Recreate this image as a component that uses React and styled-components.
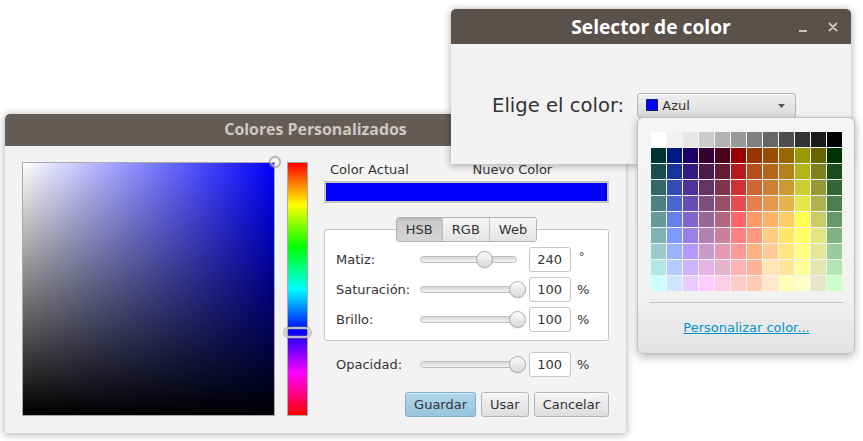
import React from "react";
import styled, { createGlobalStyle } from "styled-components";

const GlobalStyle = createGlobalStyle`
  html, body { margin: 0; padding: 0; background: #ffffff; }
  body { font-family: "DejaVu Sans", "Liberation Sans", sans-serif; }
  * { box-sizing: border-box; }
`;

const PALETTE = [
  [255,255,255],[242,242,242],[230,230,230],[204,204,204],[179,179,179],[153,153,153],[128,128,128],[102,102,102],[77,77,77],[51,51,51],[26,26,26],[0,0,0],
  [0,51,51],[0,26,128],[26,0,104],[51,0,51],[77,0,26],[153,0,0],[153,51,0],[153,77,0],[153,102,0],[153,153,0],[102,102,0],[0,51,0],
  [26,77,77],[26,51,153],[51,26,128],[77,26,77],[102,26,51],[179,26,26],[179,77,26],[179,102,26],[179,128,26],[179,179,26],[128,128,26],[26,77,26],
  [51,102,102],[51,77,179],[77,51,153],[102,51,102],[128,51,77],[204,51,51],[204,102,51],[204,128,51],[204,153,51],[204,204,51],[153,153,51],[51,102,51],
  [77,128,128],[77,102,204],[102,77,179],[128,77,128],[153,77,102],[230,77,77],[230,128,77],[230,153,77],[230,179,77],[230,230,77],[179,179,77],[77,128,77],
  [102,153,153],[102,128,230],[128,102,204],[153,102,153],[179,102,128],[255,102,102],[255,153,102],[255,179,102],[255,204,102],[255,255,77],[204,204,102],[102,153,102],
  [128,179,179],[128,153,255],[153,128,230],[179,128,179],[204,128,153],[255,128,128],[255,153,128],[255,204,128],[255,230,102],[255,255,102],[230,230,128],[128,179,128],
  [153,204,204],[153,179,255],[179,153,255],[204,153,204],[230,153,179],[255,153,153],[255,179,128],[255,204,153],[255,230,128],[255,255,128],[230,230,153],[153,204,153],
  [179,230,230],[179,204,255],[204,179,255],[230,179,230],[230,179,204],[255,179,179],[255,179,153],[255,230,179],[255,230,153],[255,255,153],[230,230,179],[179,230,179],
  [204,255,255],[204,230,255],[230,204,255],[255,204,255],[255,204,230],[255,204,204],[255,204,179],[255,230,204],[255,255,179],[255,255,204],[230,230,204],[204,255,204],
];

const Desktop = styled.div`
  position: relative;
  width: 863px;
  height: 441px;
  overflow: hidden;
  background: #ffffff;
`;

const Window = styled.section`
  position: absolute;
  left: ${(p) => p.$x}px;
  top: ${(p) => p.$y}px;
  width: ${(p) => p.$w}px;
  height: ${(p) => p.$h}px;
  display: flex;
  flex-direction: column;
  background: #f3f3f3;
  border-radius: 5px 5px 0 0;
  box-shadow: 0 1px 7px 1px rgba(0, 0, 0, 0.28);
  overflow: hidden;
`;

const TitleBar = styled.header`
  flex: 0 0 ${(p) => p.$h}px;
  display: grid;
  grid-template-columns: 1fr auto 1fr;
  align-items: center;
  background: ${(p) => (p.$active ? "#5a514b" : "#645c56")};
  color: ${(p) => (p.$active ? "#ffffff" : "#cdc8c3")};
  font-family: "Open Sans", "DejaVu Sans", sans-serif;
  font-weight: 700;
  font-size: ${(p) => p.$fs}px;
  line-height: 1;
`;

const TitleText = styled.span`
  grid-column: 2;
  white-space: nowrap;
`;

const Controls = styled.div`
  grid-column: 3;
  justify-self: end;
  display: flex;
  align-items: center;
  gap: 20px;
  padding-right: 13px;
  color: #c9c4bf;
`;

/* ---------- Color editor window ---------- */

const EditorBody = styled.div`
  flex: 1;
  display: flex;
  align-items: flex-start;
  padding: 16px 17px 0 17px;
`;

const SVSquare = styled.div`
  position: relative;
  flex: none;
  width: 253px;
  height: 254px;
  border: 1px solid #a9a9a9;
  background:
    linear-gradient(to bottom, rgba(0, 0, 0, 0), #000000),
    linear-gradient(to right, #ffffff, rgba(255, 255, 255, 0)),
    ${(p) => p.$hue};
`;

const SVMarker = styled.div`
  position: absolute;
  right: -7px;
  top: -7px;
  width: 12px;
  height: 12px;
  border-radius: 50%;
  border: 2px solid rgba(160, 160, 160, 0.75);
  box-shadow: inset 0 0 0 1px rgba(255, 255, 255, 0.8), 0 0 2px rgba(0, 0, 0, 0.2);
`;

const HueBar = styled.div`
  position: relative;
  flex: none;
  width: 21px;
  height: 254px;
  margin-left: 12px;
  border: 1px solid #a9a9a9;
  background: linear-gradient(
    to bottom,
    #ff0000 0%,
    #ffff00 16.67%,
    #00ff00 33.33%,
    #00ffff 50%,
    #0000ff 66.67%,
    #ff00ff 83.33%,
    #ff0000 100%
  );
`;

const HueMarker = styled.div`
  position: absolute;
  left: -4px;
  width: 27px;
  height: 11px;
  border-radius: 6px;
  border: 2px solid rgba(205, 205, 205, 0.9);
  box-shadow: 0 0 0 1px rgba(110, 110, 110, 0.45), inset 0 0 0 1px rgba(120, 120, 120, 0.35);
`;

const RightPanel = styled.div`
  flex: none;
  width: 285px;
  margin-left: 16px;
  display: flex;
  flex-direction: column;
  color: #333333;
  font-size: 13px;
`;

const ColorLabels = styled.div`
  display: grid;
  grid-template-columns: 1fr 1fr;
  height: 16px;
  line-height: 16px;
  & > span {
    padding-left: 6px;
  }
`;

const ColorBar = styled.div`
  margin-top: 3px;
  height: 22px;
  border: 2px solid #c3c3c3;
  background: ${(p) => p.$color};
`;

const Tabs = styled.div`
  position: relative;
  z-index: 1;
  align-self: center;
  margin-top: 14px;
  display: flex;
  height: 25px;
  border: 1px solid #b3b3b3;
  border-radius: 3px;
  overflow: hidden;
`;

const Tab = styled.div`
  display: flex;
  align-items: center;
  padding: 0 ${(p) => p.$pad}px;
  height: 100%;
  color: #333;
  border-left: ${(p) => (p.$first ? "none" : "1px solid #c0c0c0")};
  background: ${(p) =>
    p.$selected
      ? "linear-gradient(to bottom, #c9c9c9, #d6d6d6)"
      : "linear-gradient(to bottom, #f7f7f7, #e4e4e4)"};
  box-shadow: ${(p) => (p.$selected ? "inset 0 1px 2px rgba(0,0,0,0.12)" : "none")};
`;

const GroupBox = styled.div`
  margin-top: -13px;
  height: 112px;
  border: 1px solid #c6c6c6;
  border-radius: 3px;
  background: #ffffff;
  padding: 17px 0 0 11px;
  display: flex;
  flex-direction: column;
  gap: 5px;
`;

const Row = styled.div`
  display: flex;
  align-items: center;
  height: 25px;
  padding-left: ${(p) => p.$indent || 0}px;
  margin-top: ${(p) => p.$top || 0}px;
`;

const RowLabel = styled.span`
  flex: none;
  width: 84px;
  white-space: nowrap;
`;

const SliderBox = styled.div`
  position: relative;
  flex: none;
  width: 97px;
  height: 25px;
  display: flex;
  align-items: center;
`;

const SliderTrack = styled.div`
  width: 100%;
  height: 7px;
  border-radius: 4px;
  border: 1px solid #bdbdbd;
  background: linear-gradient(to bottom, #d9d9d9, #f3f3f3);
`;

const SliderThumb = styled.div`
  position: absolute;
  top: 4px;
  width: 17px;
  height: 17px;
  border-radius: 50%;
  border: 1px solid #a9a9a9;
  background: linear-gradient(to bottom, #fbfbfb, #dadada);
  box-shadow: 0 1px 1px rgba(0, 0, 0, 0.08);
`;

const NumberField = styled.input`
  flex: none;
  width: 42px;
  height: 25px;
  margin-left: 12px;
  border: 1px solid #c6c6c6;
  border-radius: 3px;
  background: #ffffff;
  padding: 0 8px 0 0;
  text-align: right;
  font: 13px "DejaVu Sans", sans-serif;
  color: #333;
  outline: none;
`;

const Unit = styled.span`
  margin-left: ${(p) => p.$ml}px;
  margin-top: ${(p) => p.$mt || 0}px;
  font-size: ${(p) => p.$fs || 13}px;
`;

const ButtonRow = styled.div`
  margin-top: 15px;
  display: flex;
  justify-content: flex-end;
  gap: 5px;
`;

const Button = styled.button`
  height: 25px;
  padding: 0 8px;
  border: 1px solid ${(p) => (p.$default ? "#7dadc9" : "#b6b6b6")};
  border-radius: 3px;
  background: ${(p) =>
    p.$default
      ? "linear-gradient(to bottom, #aed5ea, #98c5dd)"
      : "linear-gradient(to bottom, #f6f6f6, #dddddd)"};
  box-shadow: inset 0 1px 0 rgba(255, 255, 255, 0.55);
  font: 13px "DejaVu Sans", sans-serif;
  color: #333;
`;

/* ---------- Picker window ---------- */

const PickerBody = styled.div`
  flex: 1;
  display: flex;
  align-items: center;
  gap: 13px;
  padding: 2px 0 0 41px;
`;

const PromptLabel = styled.span`
  font-size: 19.6px;
  color: #333333;
  white-space: nowrap;
`;

const ComboBox = styled.div`
  width: 159px;
  height: 25px;
  display: flex;
  align-items: center;
  padding: 0 10px 0 8px;
  border: 1px solid #b4b4b4;
  border-radius: 3px;
  background: linear-gradient(to bottom, #efefef, #dbdbdb);
  box-shadow: inset 0 1px 0 rgba(255, 255, 255, 0.6);
  font-size: 13px;
  color: #333;
`;

const ComboSwatch = styled.span`
  width: 12px;
  height: 12px;
  flex: none;
  background: ${(p) => p.$color};
  border: 1px solid #1a1a6a;
`;

const ComboText = styled.span`
  margin-left: 4px;
  flex: 1;
`;

const Popup = styled.div`
  position: absolute;
  left: 637px;
  top: 117px;
  width: 218px;
  height: 237px;
  border: 1px solid #c2c2c2;
  border-radius: 6px;
  background: linear-gradient(to bottom, #f5f5f5 0%, #f2f2f2 75%, #e2e2e2 100%);
  box-shadow: 0 3px 8px rgba(0, 0, 0, 0.28);
  padding: 14px 0 0 13px;
  display: flex;
  flex-direction: column;
`;

const PaletteGrid = styled.div`
  display: grid;
  grid-template-columns: repeat(12, 15px);
  grid-auto-rows: 15px;
  gap: 1px;
`;

const Swatch = styled.div`
  background: ${(p) => p.$c};
`;

const Separator = styled.div`
  margin-top: 11px;
  width: 193px;
  margin-left: -1px;
  border-top: 1px solid #c4c4c4;
`;

const LinkRow = styled.div`
  margin-top: 17px;
  width: 191px;
  display: flex;
  justify-content: center;
`;

const Link = styled.a`
  font-size: 13px;
  line-height: 16px;
  color: #0096c9;
  text-decoration: underline;
  white-space: nowrap;
`;

function MinimizeIcon() {
  return (
    <svg width="10" height="10" viewBox="0 0 10 10" style={{ display: "block", marginTop: 1 }}>
      <rect x="1" y="8" width="8" height="2" fill="currentColor" />
    </svg>
  );
}

function CloseIcon() {
  return (
    <svg width="10" height="10" viewBox="0 0 10 10" style={{ display: "block", marginTop: 1 }}>
      <path d="M1.5 1.5 L8.5 8.5 M8.5 1.5 L1.5 8.5" stroke="currentColor" strokeWidth="1.8" strokeLinecap="round" />
    </svg>
  );
}

function ArrowDown() {
  return (
    <svg width="7" height="4" viewBox="0 0 7 4" style={{ display: "block", marginTop: 1 }}>
      <path d="M0 0 H7 L3.5 4 Z" fill="#555" />
    </svg>
  );
}

function HSBSlider({ fraction }) {
  return (
    <SliderBox>
      <SliderTrack />
      <SliderThumb style={{ left: `${fraction * 97 - 8.5}px` }} />
    </SliderBox>
  );
}

const hsbRows = [
  { label: "Matiz:", value: "240", frac: 240 / 360, unit: "°" },
  { label: "Saturación:", value: "100", frac: 1, unit: "%" },
  { label: "Brillo:", value: "100", frac: 1, unit: "%" },
];

export default function App() {
  const hue = 240;
  return (
    <>
      <GlobalStyle />
      <Desktop>
        <Window $x={5} $y={114} $w={621} $h={319}>
          <TitleBar $h={32} $fs={15.9}>
            <TitleText>Colores Personalizados</TitleText>
          </TitleBar>
          <EditorBody>
            <SVSquare $hue="#0000ff">
              <SVMarker />
            </SVSquare>
            <HueBar>
              <HueMarker style={{ top: `${(hue / 360) * 252 - 4.5}px` }} />
            </HueBar>
            <RightPanel>
              <ColorLabels>
                <span>Color Actual</span>
                <span>Nuevo Color</span>
              </ColorLabels>
              <ColorBar $color="#0000ff" />
              <Tabs>
                <Tab $first $selected $pad={9}>HSB</Tab>
                <Tab $pad={9}>RGB</Tab>
                <Tab $pad={9}>Web</Tab>
              </Tabs>
              <GroupBox>
                {hsbRows.map((r) => (
                  <Row key={r.label}>
                    <RowLabel>{r.label}</RowLabel>
                    <HSBSlider fraction={r.frac} />
                    <NumberField readOnly value={r.value} />
                    {r.unit === "°" ? (
                      <Unit $ml={8} $mt={-6} $fs={11}>°</Unit>
                    ) : (
                      <Unit $ml={6}>%</Unit>
                    )}
                  </Row>
                ))}
              </GroupBox>
              <Row $indent={12} $top={11}>
                <RowLabel>Opacidad:</RowLabel>
                <HSBSlider fraction={1} />
                <NumberField readOnly value="100" />
                <Unit $ml={6}>%</Unit>
              </Row>
              <ButtonRow>
                <Button $default>Guardar</Button>
                <Button>Usar</Button>
                <Button>Cancelar</Button>
              </ButtonRow>
            </RightPanel>
          </EditorBody>
        </Window>

        <Window $x={451} $y={9} $w={400} $h={155}>
          <TitleBar $h={35} $fs={19.2} $active>
            <TitleText>Selector de color</TitleText>
            <Controls>
              <MinimizeIcon />
              <CloseIcon />
            </Controls>
          </TitleBar>
          <PickerBody>
            <PromptLabel>Elige el color:</PromptLabel>
            <ComboBox>
              <ComboSwatch $color="#0000ff" />
              <ComboText>Azul</ComboText>
              <ArrowDown />
            </ComboBox>
          </PickerBody>
        </Window>

        <Popup>
          <PaletteGrid>
            {PALETTE.map(([r, g, b], i) => (
              <Swatch key={i} $c={`rgb(${r},${g},${b})`} />
            ))}
          </PaletteGrid>
          <Separator />
          <LinkRow>
            <Link>Personalizar color...</Link>
          </LinkRow>
        </Popup>
      </Desktop>
    </>
  );
}
